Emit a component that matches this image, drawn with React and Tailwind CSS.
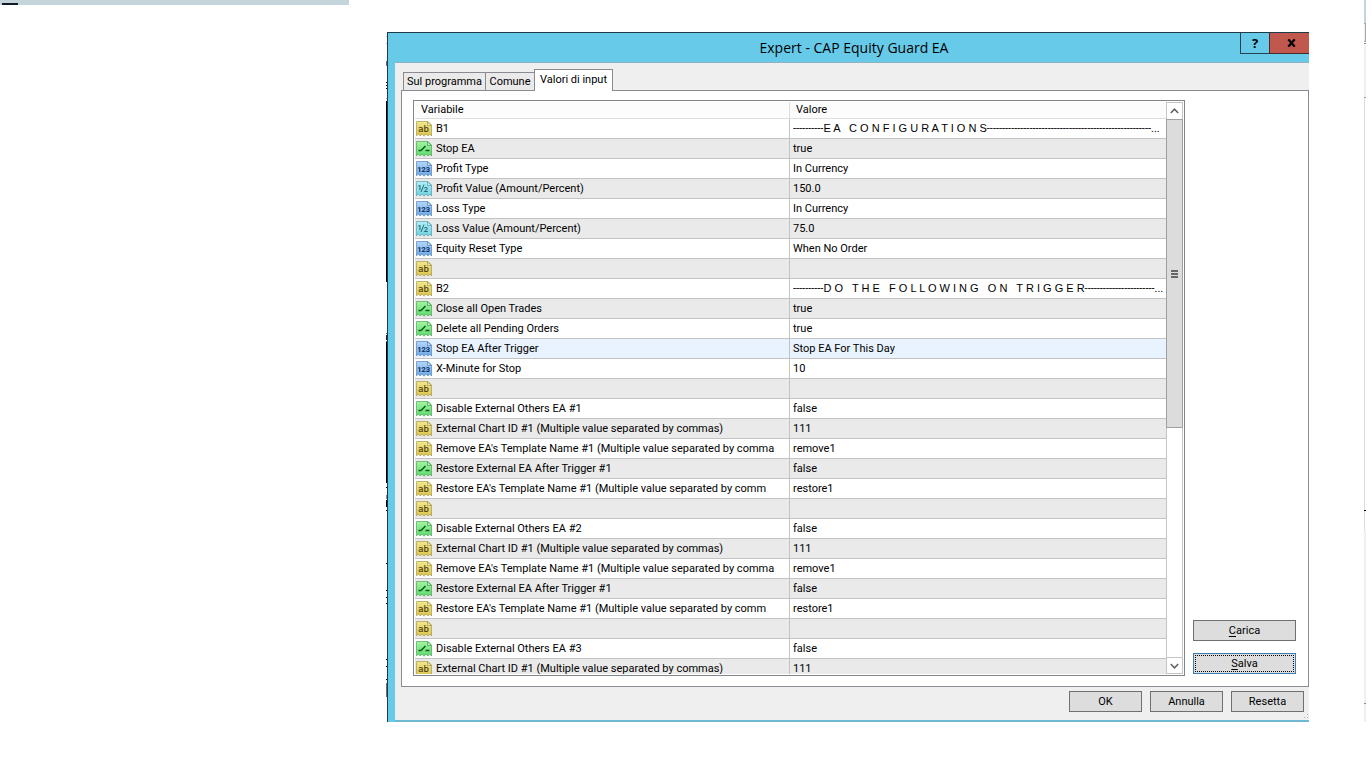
import React, { useState } from "react";

const DASH = "-";

const BLOCK = [
  ["bool", "false"],
  ["string", "111"],
  ["string", "remove1"],
  ["bool", "false"],
  ["string", "restore1"],
  ["string", ""],
];

function externalBlock(n) {
  const names = [
    `Disable External Others EA #${n}`,
    "External Chart ID #1 (Multiple value separated by commas)",
    "Remove EA's Template Name #1 (Multiple value separated by comma",
    "Restore External EA After Trigger #1",
    "Restore EA's Template Name #1 (Multiple value separated by comm",
    "",
  ];
  return BLOCK.map(([type, value], i) => ({ type, name: names[i], value }));
}

const ROWS = [
  { type: "string", name: "B1", heading: "E A   C O N F I G U R A T I O N S", tail: 54 },
  { type: "bool", name: "Stop EA", value: "true" },
  { type: "int", name: "Profit Type", value: "In Currency" },
  { type: "double", name: "Profit Value (Amount/Percent)", value: "150.0" },
  { type: "int", name: "Loss Type", value: "In Currency" },
  { type: "double", name: "Loss Value (Amount/Percent)", value: "75.0" },
  { type: "int", name: "Equity Reset Type", value: "When No Order" },
  { type: "string", name: "", value: "" },
  { type: "string", name: "B2", heading: "D O   T H E   F O L L O W I N G   O N   T R I G G E R", tail: 23 },
  { type: "bool", name: "Close all Open Trades", value: "true" },
  { type: "bool", name: "Delete all Pending Orders", value: "true" },
  { type: "int", name: "Stop EA After Trigger", value: "Stop EA For This Day", hot: true },
  { type: "int", name: "X-Minute for Stop", value: "10" },
  { type: "string", name: "", value: "" },
  ...externalBlock(1),
  ...externalBlock(2),
  ...externalBlock(3).slice(0, 2),
];

const TONES = {
  string: { top: "#f1e78f", low: "#d9c44f", edge: "#a3923a", ink: "#4d4310" },
  bool: { top: "#a5f3a2", low: "#5edb6c", edge: "#3d9f4c", ink: "#0d5a1c" },
  int: { top: "#b4d6fa", low: "#6ba6e6", edge: "#4a7db8", ink: "#0e2f5c" },
  double: { top: "#b5eff5", low: "#6fd0de", edge: "#489eac", ink: "#155c6b" },
};

function TypeIcon({ type }) {
  const tone = TONES[type];
  const id = `fill-${type}`;
  return (
    <svg width="16" height="16" viewBox="0 0 16 16" className="shrink-0" aria-hidden="true">
      <defs>
        <linearGradient id={id} x1="0" y1="0" x2="0" y2="1">
          <stop offset="0" stopColor={tone.top} />
          <stop offset="1" stopColor={tone.low} />
        </linearGradient>
      </defs>
      <path
        d="M.5 .5H12L15.5 4V15L13.5 13L12 15L10 13L8 15.3L6 13L4.2 15L2.5 13L.5 14.8Z"
        fill={`url(#${id})`}
        stroke={tone.edge}
        strokeOpacity="0.8"
        strokeWidth="0.8"
      />
      <path d="M11.5 .8V4.5H15.3Z" fill="#fff" fillOpacity="0.5" stroke={tone.edge} strokeWidth="0.7" />
      {type === "bool" && (
        <path d="M2.5 9.5H5L9.5 5M9.5 9.5H13.5" fill="none" stroke={tone.ink} strokeWidth="1.5" />
      )}
      {type === "string" && (
        <text x="7.5" y="10.8" textAnchor="middle" fontFamily="DejaVu Sans" fontSize="8.5" stroke={tone.ink} strokeWidth="0.2" fill={tone.ink}>ab</text>
      )}
      {type === "int" && (
        <text x="7.7" y="10.8" textAnchor="middle" fontFamily="Roboto" fontWeight="700" fontSize="7.5" fill={tone.ink}>123</text>
      )}
      {type === "double" && (
        <>
          <text x="3.6" y="8.6" textAnchor="middle" fontFamily="Roboto" fontWeight="500" fontSize="7.5" fill={tone.ink}>1</text>
          <path d="M5 11L8 3.5" stroke={tone.ink} strokeWidth="0.9" />
          <text x="10" y="10.6" textAnchor="middle" fontFamily="Roboto" fontWeight="500" fontSize="7.5" fill={tone.ink}>2</text>
        </>
      )}
    </svg>
  );
}

function rowColor(row, i) {
  if (row.hot) return "bg-[#e8f3ff]";
  return i % 2 ? "bg-[#eaeaea]" : "bg-white";
}

function InputsTable() {
  return (
    <table className="w-full table-fixed border-separate border-spacing-0">
      <thead>
        <tr className="h-[17px] bg-[#fcfcfc] text-left">
          <th className="w-[375px] border-r border-b border-[#dedede] p-0 pl-1.5 font-normal">Variabile</th>
          <th className="border-b border-[#dedede] p-0 pl-1.5 font-normal">Valore</th>
        </tr>
      </thead>
      <tbody>
        {ROWS.map((row, i) => (
          <tr key={i} className={`h-5 ${rowColor(row, i)}`}>
            <td className="border-r border-b border-[#c3c3c3] p-0">
              <div className="flex h-[19px] items-center gap-1 overflow-hidden pl-px whitespace-nowrap">
                <TypeIcon type={row.type} />
                {row.name}
              </div>
            </td>
            <td className="border-b border-[#c3c3c3] p-0">
              <div className="h-[19px] truncate pl-[3px] leading-[19px]">
                {row.heading ? (
                  <>
                    {DASH.repeat(10)}
                    <span className="font-['Liberation_Sans'] whitespace-pre">{row.heading}</span>
                    {DASH.repeat(row.tail)}...
                  </>
                ) : (
                  row.value
                )}
              </div>
            </td>
          </tr>
        ))}
      </tbody>
    </table>
  );
}

function Chevron({ d }) {
  return (
    <svg width="9" height="6" viewBox="0 0 9 6" aria-hidden="true">
      <path d={d} fill="none" stroke="#606060" strokeWidth="1.5" />
    </svg>
  );
}

function ScrollBar() {
  return (
    <div className="flex w-[17px] shrink-0 flex-col border border-[#c4c4c4] bg-white">
      <button type="button" aria-label="Scroll up" className="flex h-4 shrink-0 items-center justify-center">
        <Chevron d="M.8 5L4.5 1.2L8.2 5" />
      </button>
      <div className="-mx-px flex basis-[309px] flex-col items-center justify-center gap-px border border-[#a0a0a0] bg-[#dcdcdc]">
        <i className="h-0.5 w-[7px] bg-[#666]" />
        <i className="h-0.5 w-[7px] bg-[#666]" />
        <i className="h-0.5 w-[7px] bg-[#666]" />
      </div>
      <button
        type="button"
        aria-label="Scroll down"
        className="mt-auto flex h-4 shrink-0 items-center justify-center border-t border-[#c4c4c4]"
      >
        <Chevron d="M.8 1L4.5 4.8L8.2 1" />
      </button>
    </div>
  );
}

function PushButton({ children, className = "w-[73px]" }) {
  return (
    <button type="button" className={`h-[21px] border border-[#707070] bg-[#dddddd] ${className}`}>
      {children}
    </button>
  );
}

function Tabs() {
  const [active, setActive] = useState("Valori di input");
  const tabs = [
    { label: "Sul programma", width: "w-[83px]" },
    { label: "Comune", width: "w-[50px]" },
    { label: "Valori di input", width: "w-[79px]" },
  ];
  return (
    <div role="tablist" className="flex items-end pl-0.5">
      {tabs.map((tab) => {
        const on = tab.label === active;
        return (
          <button
            key={tab.label}
            type="button"
            role="tab"
            aria-selected={on}
            onClick={() => setActive(tab.label)}
            className={`-mr-px border border-b-0 border-[#8a8a93] ${tab.width} ${
              on ? "relative z-10 -mb-px h-[22px] bg-white pb-0.5" : "h-[18px] bg-[#eaeaea]"
            }`}
          >
            {tab.label}
          </button>
        );
      })}
    </div>
  );
}

// One-pixel remains of the chart window behind the dialog's left side
function ChartEdge() {
  return (
    <svg width="1" height="722" viewBox="0 0 1 722" className="shrink-0" shapeRendering="crispEdges" aria-hidden="true">
      <path d="M.5 36v1M.5 43v1M.5 98v1" stroke="#b8bcc0" />
      <path d="M.5 61v5M.5 683v14" stroke="#6a6d74" />
      <path
        d="M.5 82v1M.5 85v1M.5 88v1M.5 101v181M.5 342v141M.5 487v1M.5 500v7M.5 510v1M.5 563v1M.5 590v1M.5 597v1M.5 603v1M.5 659v1M.5 666v1M.5 679v1"
        stroke="#000"
      />
      <path d="M.5 333v1M.5 341v1" stroke="#4f8a55" />
      <path d="M.5 335v5" stroke="#3a1414" />
      <path d="M.5 495v4" stroke="#8b8b8b" />
    </svg>
  );
}

function WindowEdge() {
  return (
    <div className="flex w-0.5 shrink-0 flex-col">
      <i className="h-[23px] bg-[#c3d5da]" />
      <i className="h-[19px] border-y border-r border-[#a5a5a5] bg-[#f0f0f0]" />
      <i className="mt-px h-px bg-[#8a8a8a]" />
      <i className="mt-px h-[52px] bg-[#efefef]" />
      <i className="h-px bg-[#a0a0a0]" />
      <i className="h-[412px] w-px bg-[#dcdcdc]" />
      <i className="h-px bg-black" />
      <i className="h-[19px] w-px bg-[#dcdcdc]" />
      <i className="h-[173px] bg-[#efefef]" />
      <i className="h-px bg-[#909090]" />
      <i className="h-[18px] bg-[#efefef]" />
    </div>
  );
}

function Dialog() {
  return (
    <section className="mt-8 min-w-0 flex-1 border-t border-l border-[#1f3a48] bg-[#67cae9]">
      <header className="flex h-[29px] items-start">
        <h1 className="flex-1 pl-20 text-center font-['Open_Sans','Noto_Sans',sans-serif] text-[14px] leading-[30px]">
          Expert - CAP Equity Guard EA
        </h1>
        <button
          type="button"
          className="h-[21px] w-[29px] border-b border-l border-[#24424f] font-['Open_Sans',sans-serif] text-[13px] leading-5 font-bold"
        >
          ?
        </button>
        <button
          type="button"
          aria-label="Chiudi"
          className="flex h-[21px] w-10 items-center justify-center border-b border-l border-[#4a2a2a] bg-[#c0584d] pl-1"
        >
          <svg width="9" height="8" viewBox="0 0 9 8" aria-hidden="true">
            <path d="M1.3 .3L7.7 7.7M7.7 .3L1.3 7.7" stroke="#000" strokeWidth="2.2" />
          </svg>
        </button>
      </header>

      <div className="ml-[7px] border-t border-t-[#8fb3c0] border-b-2 border-b-[#6db9d2] bg-[#efefef] pt-1.5">
        <div className="pl-1.5">
          <Tabs />
          <div className="flex gap-2 border border-[#8a8a93] bg-white pt-[9px] pr-3 pb-2.5 pl-[11px]">
            {/* Input list, the last row runs under the lower frame */}
            <div className="flex h-[576px] min-w-0 flex-1 border border-[#82868c] p-px">
              <div className="min-w-0 flex-1 overflow-hidden">
                <InputsTable />
              </div>
              <ScrollBar />
            </div>
            <div className="flex w-[103px] shrink-0 flex-col justify-end gap-3 pb-0.5">
              <PushButton className="w-full">
                <u className="underline-offset-2">C</u>arica
              </PushButton>
              <button type="button" className="h-[21px] border border-[#3c7fb1] bg-[#dddddd] p-px">
                <span className="flex h-full items-center justify-center border border-dotted border-black">
                  <span>
                    <u className="underline-offset-2">S</u>alva
                  </span>
                </span>
              </button>
            </div>
          </div>
        </div>

        <footer className="relative flex justify-end gap-2 pt-1 pr-[5px] pb-2">
          <PushButton>OK</PushButton>
          <PushButton>Annulla</PushButton>
          <PushButton>Resetta</PushButton>
          <svg width="6" height="6" viewBox="0 0 6 6" className="absolute right-0 bottom-0" aria-hidden="true">
            <path d="M4 0h1v1h-1zM4 3h1v1h-1zM1 3h1v1h-1z" fill="#b0b0b0" />
          </svg>
        </footer>
      </div>
    </section>
  );
}

export default function App() {
  return (
    <main className="flex items-start bg-white font-['Roboto','Liberation_Sans',sans-serif] text-[11px] leading-4 text-black">
      <div className="h-[5px] w-[386px] shrink-0 pr-[37px]">
        <div className="flex h-full items-end bg-[#c3d5da] pl-0.5">
          <i className="h-0.5 w-4 bg-[#10182a]" />
        </div>
      </div>
      <ChartEdge />
      <Dialog />
      <div className="w-[55px] shrink-0" />
      <WindowEdge />
      <div className="w-1.5 shrink-0" />
    </main>
  );
}
